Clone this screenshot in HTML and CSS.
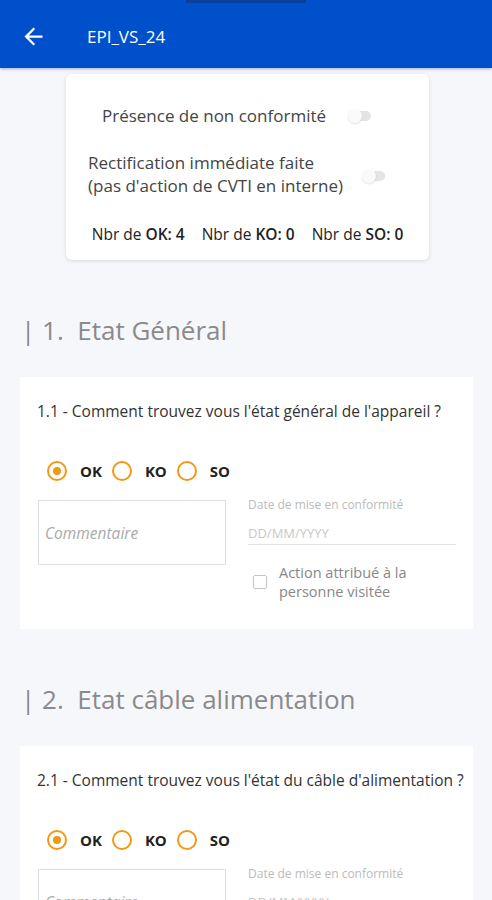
FILE: index.html
```html
<!DOCTYPE html>
<html lang="fr">
<head>
<meta charset="utf-8">
<title>EPI_VS_24</title>
<link rel="stylesheet" href="styles.css">
</head>
<body>
<header class="appbar">
  <span class="notch"></span>
  <button class="back" aria-label="Retour">
    <svg viewBox="0 0 24 24" width="27" height="27"><path d="M20 11H7.83l5.59-5.59L12 4l-8 8 8 8 1.41-1.41L7.83 13H20v-2z" fill="#fff"/></svg>
  </button>
  <h1 class="title">EPI_VS_24</h1>
</header>

<main class="content">
  <section class="summary">
    <div class="switch-row row-one">
      <span class="switch-label">Présence de non conformité</span>
      <span class="toggle"></span>
    </div>
    <div class="switch-row row-two">
      <span class="switch-label">Rectification immédiate faite<br>(pas d'action de CVTI en interne)</span>
      <span class="toggle"></span>
    </div>
    <div class="counts">
      <span>Nbr de <b>OK: 4</b></span>
      <span>Nbr de <b>KO: 0</b></span>
      <span>Nbr de <b>SO: 0</b></span>
    </div>
  </section>

  <h2 class="section-title">| 1.&nbsp; Etat Général</h2>
  <article class="card">
    <p class="question">1.1 - Comment trouvez vous l'état général de l'appareil ?</p>
    <div class="choices">
      <span class="radio checked"></span><span class="choice-label">OK</span>
      <span class="radio"></span><span class="choice-label">KO</span>
      <span class="radio"></span><span class="choice-label">SO</span>
    </div>
    <div class="answer">
      <div class="comment">Commentaire</div>
      <div class="date-col">
        <div class="date-label">Date de mise en conformité</div>
        <div class="date-input">DD/MM/YYYY</div>
        <div class="check-row">
          <span class="checkbox"></span>
          <span class="check-label">Action attribué à la<br>personne visitée</span>
        </div>
      </div>
    </div>
  </article>

  <h2 class="section-title">| 2.&nbsp; Etat câble alimentation</h2>
  <article class="card">
    <p class="question">2.1 - Comment trouvez vous l'état du câble d'alimentation ?</p>
    <div class="choices">
      <span class="radio checked"></span><span class="choice-label">OK</span>
      <span class="radio"></span><span class="choice-label">KO</span>
      <span class="radio"></span><span class="choice-label">SO</span>
    </div>
    <div class="answer">
      <div class="comment">Commentaire</div>
      <div class="date-col">
        <div class="date-label">Date de mise en conformité</div>
        <div class="date-input">DD/MM/YYYY</div>
        <div class="check-row">
          <span class="checkbox"></span>
          <span class="check-label">Action attribué à la<br>personne visitée</span>
        </div>
      </div>
    </div>
  </article>
</main>
</body>
</html>
```

FILE: styles.css
```css
* { box-sizing: border-box; }

html, body {
  margin: 0;
  padding: 0;
  height: 900px;
  overflow: hidden;
}

body {
  background: #f6f7fb;
  font-family: "Open Sans", "Noto Sans", sans-serif;
  color: #333;
}

.appbar {
  position: relative;
  height: 68px;
  background: #0050cc;
  display: flex;
  align-items: center;
  padding: 4px 0 0 20px;
  box-shadow: 0 1px 3px rgba(0, 40, 120, 0.35);
}

.notch {
  position: absolute;
  top: 0;
  left: 186px;
  width: 120px;
  height: 3px;
  background: #0a3f9e;
}

.back {
  border: 0;
  background: none;
  padding: 0;
  width: 27px;
  height: 27px;
  display: flex;
}

.title {
  margin: 0 0 0 40px;
  font-size: 17px;
  font-weight: 500;
  color: #fff;
}

.content {
  display: flex;
  flex-direction: column;
}

.summary {
  width: 363px;
  margin: 6px 63px 0 66px;
  background: #fff;
  border-radius: 6px;
  box-shadow: 0 1px 4px rgba(0, 0, 0, 0.12);
  padding: 31px 0 17px;
  display: flex;
  flex-direction: column;
}

.switch-row {
  display: flex;
  align-items: center;
  justify-content: center;
  padding-right: 22px;
  font-size: 17px;
  line-height: 22px;
  color: #444;
}

.row-one { gap: 23px; }
.row-two { gap: 20px; margin-top: 24px; line-height: 23px; }
.row-two .toggle { margin-top: 4px; }

.toggle {
  position: relative;
  width: 22px;
  height: 10px;
  border-radius: 5px;
  background: #e4e4e4;
  flex: none;
}

.toggle::before {
  content: "";
  position: absolute;
  left: -1px;
  top: -2px;
  width: 14px;
  height: 14px;
  border-radius: 50%;
  background: #fafafa;
  box-shadow: 0 1px 2px rgba(0, 0, 0, 0.12);
}

.counts {
  display: flex;
  justify-content: center;
  gap: 17px;
  margin-top: 28px;
  font-size: 15.5px;
  line-height: 18px;
  color: #222;
}

.counts b { font-weight: 600; }

.section-title {
  margin: 54px 0 31px;
  padding-left: 21px;
  font-size: 26px;
  line-height: 32px;
  font-weight: 400;
  color: #8a8a8a;
  white-space: pre;
}

.card {
  margin: 0 19px 0 20px;
  background: #fff;
  padding: 25px 17px 28px;
}

.question {
  margin: 0;
  font-size: 15.5px;
  line-height: 18px;
  color: #333;
  white-space: nowrap;
}

.choices {
  display: flex;
  align-items: center;
  margin: 41px 0 0 10px;
  height: 20px;
}

.radio {
  width: 20px;
  height: 20px;
  border-radius: 50%;
  border: 2.5px solid #f39814;
  flex: none;
  display: flex;
  align-items: center;
  justify-content: center;
}

.radio.checked::after {
  content: "";
  width: 8px;
  height: 8px;
  border-radius: 50%;
  background: #f39814;
}

.choice-label {
  margin: 0 10px 0 13px;
  font-size: 15px;
  font-weight: 700;
  color: #222;
}

.answer {
  display: flex;
  gap: 22px;
  margin-top: 19px;
}

.comment {
  width: 188px;
  height: 65px;
  margin-left: 1px;
  border: 1px solid #dedede;
  display: flex;
  align-items: center;
  padding-left: 6px;
  font-size: 15.5px;
  font-style: italic;
  color: #aaa;
  flex: none;
}

.date-col {
  width: 209px;
  display: flex;
  flex-direction: column;
}

.date-label {
  font-size: 12px;
  line-height: 10px;
  color: #bbb;
}

.date-input {
  margin-top: 12px;
  height: 23px;
  border-bottom: 1px solid #e2e2e2;
  font-size: 13px;
  line-height: 22px;
  color: #c8c8c8;
}

.check-row {
  display: flex;
  align-items: center;
  margin-top: 18px;
  padding-left: 5px;
  gap: 12px;
}

.checkbox {
  width: 14px;
  height: 14px;
  border: 1.5px solid #c4c4c4;
  border-radius: 2px;
  flex: none;
}

.check-label {
  font-size: 14.5px;
  line-height: 19px;
  color: #888;
}
```
